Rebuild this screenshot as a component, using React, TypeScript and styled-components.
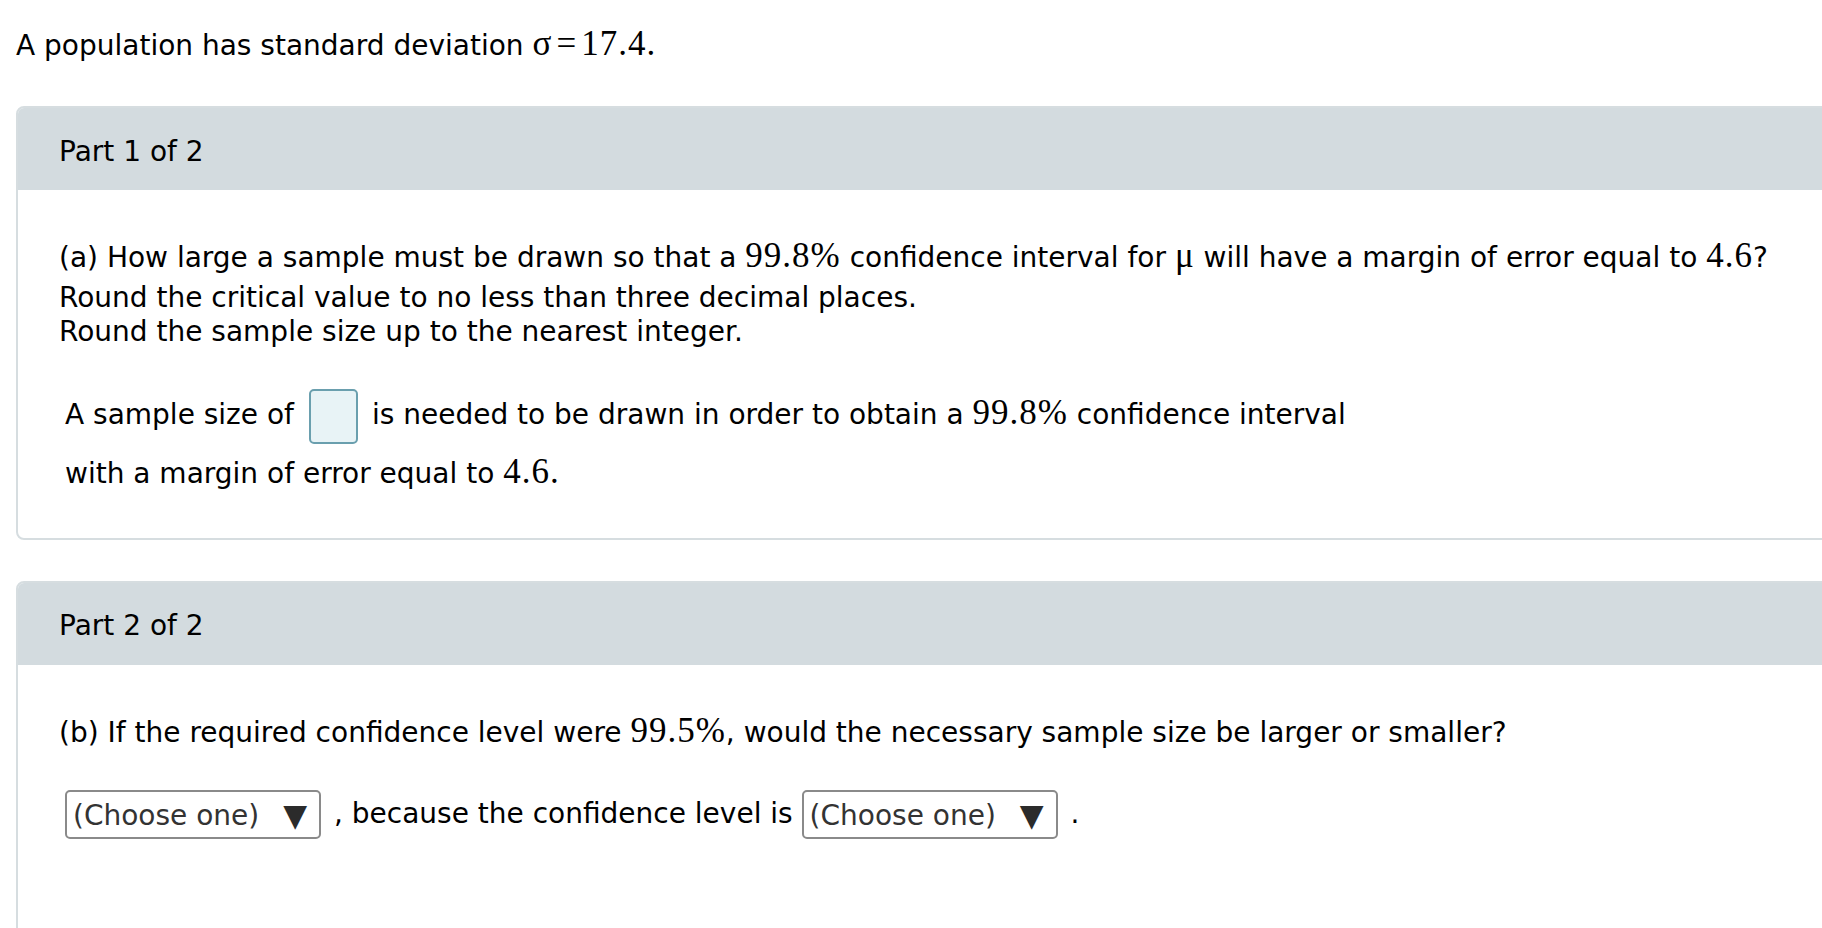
import React from 'react';
import styled, { createGlobalStyle } from 'styled-components';

const GlobalStyle = createGlobalStyle`
  html, body {
    margin: 0;
    padding: 0;
    overflow: hidden;
    background: #fff;
  }
  body {
    font-family: "DejaVu Sans", Verdana, sans-serif;
    color: #000;
  }
`;

const Page = styled.div`
  padding: 24px 0 0 16px;
  width: 1822px;
  height: 928px;
  box-sizing: border-box;
  overflow: hidden;
`;

const Statement = styled.div`
  font-size: 28px;
  line-height: 40px;
`;

// math runs are set in a serif face, a bit larger than the prose
const M = styled.span`
  font-family: "Liberation Serif", "Times New Roman", serif;
  font-size: 35px;
  letter-spacing: 1px;
`;

const Eq = styled.span`
  margin: 0 4px;
`;

const Card = styled.section<{ $gap: number }>`
  margin-top: ${p => p.$gap}px;
  margin-right: -40px;
  border: 2px solid #d6dde0;
  border-radius: 8px;
  overflow: hidden;
`;

const CardHeader = styled.div`
  height: 82px;
  box-sizing: border-box;
  padding: 4px 0 0 41px;
  background: #d3dbdf;
  display: flex;
  align-items: center;
  font-size: 28px;
`;

const CardBody = styled.div<{ $minHeight?: number }>`
  padding: 43px 0 37px 41px;
  min-height: ${p => p.$minHeight ?? 0}px;
  font-size: 28px;
`;

const QLine = styled.div<{ $lh: number }>`
  line-height: ${p => p.$lh}px;
`;

const Answer = styled.div<{ $mt: number }>`
  margin-top: ${p => p.$mt}px;
  padding-left: 6px;
  line-height: 55px;
`;

const Blank = styled.span`
  display: inline-block;
  width: 49px;
  height: 55px;
  box-sizing: border-box;
  margin: 0 14px 0 15px;
  border: 2px solid #6a9fae;
  border-radius: 5px;
  background: #e8f3f6;
  vertical-align: middle;
`;

const Select = styled.span`
  display: inline-flex;
  align-items: center;
  justify-content: space-between;
  width: 256px;
  height: 49px;
  box-sizing: border-box;
  padding: 2px 12px 0 6px;
  border: 2px solid #8a8a8a;
  border-radius: 5px;
  color: #333;
  vertical-align: middle;
  font-size: 28px;
`;

const Arrow = styled.span`
  font-size: 31px;
  line-height: 1;
  color: #2b2b2b;
`;

const Tail = styled.span<{ $ml: number }>`
  margin-left: ${p => p.$ml}px;
`;

const ChooseOne: React.FC = () => (
  <Select>
    (Choose one)
    <Arrow>▼</Arrow>
  </Select>
);

const App: React.FC = () => (
  <>
    <GlobalStyle />
    <Page>
      <Statement>
        A population has standard deviation{' '}
        <M>
          σ<Eq>=</Eq>17.4.
        </M>
      </Statement>

      <Card $gap={40}>
        <CardHeader>Part 1 of 2</CardHeader>
        <CardBody>
          <QLine $lh={46}>
            (a) How large a sample must be drawn so that a <M>99.8%</M> confidence interval for{' '}
            <M>μ</M> will have a margin of error equal to <M>4.6</M>?
          </QLine>
          <QLine $lh={34}>Round the critical value to no less than three decimal places.</QLine>
          <QLine $lh={34}>Round the sample size up to the nearest integer.</QLine>
          <Answer $mt={36}>
            A sample size of<Blank />is needed to be drawn in order to obtain a <M>99.8%</M>{' '}
            confidence interval
            <br />
            with a margin of error equal to <M>4.6.</M>
          </Answer>
        </CardBody>
      </Card>

      <Card $gap={41}>
        <CardHeader>Part 2 of 2</CardHeader>
        <CardBody $minHeight={400}>
          <QLine $lh={46}>
            (b) If the required confidence level were <M>99.5%</M>, would the necessary sample size
            be larger or smaller?
          </QLine>
          <Answer $mt={30}>
            <ChooseOne />
            <Tail $ml={13}>, because the confidence level is </Tail>
            <ChooseOne />
            <Tail $ml={13}>.</Tail>
          </Answer>
        </CardBody>
      </Card>
    </Page>
  </>
);

export default App;
